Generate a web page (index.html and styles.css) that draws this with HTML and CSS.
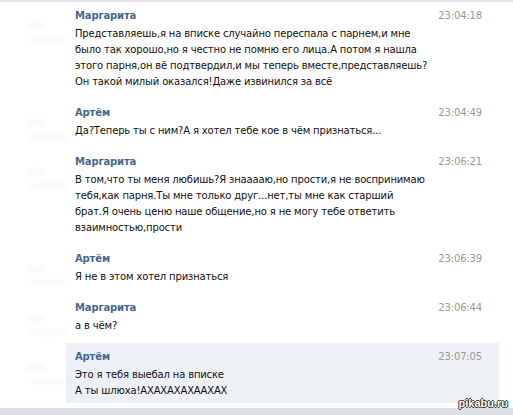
FILE: index.html
```html
<!DOCTYPE html>
<html>
<head>
<meta charset="utf-8">
<link rel="stylesheet" href="styles.css">
</head>
<body>
<div class="page">
  <div class="topbar"></div>
  <div class="list">
    <div class="msg">
      <div class="avatar"><span class="blur b1"></span><span class="blur b2"></span></div>
      <div class="body">
        <div class="head"><span class="name">Маргарита</span><span class="time">23:04:18</span></div>
        <div class="text">Представляешь,я на вписке случайно переспала с парнем,и мне<br>было так хорошо,но я честно не помню его лица.А потом я нашла<br>этого парня,он вё подтвердил,и мы теперь вместе,представляешь?<br>Он такой милый оказался!Даже извинился за всё</div>
      </div>
    </div>
    <div class="msg">
      <div class="avatar"><span class="blur b1"></span><span class="blur b2"></span></div>
      <div class="body">
        <div class="head"><span class="name">Артём</span><span class="time">23:04:49</span></div>
        <div class="text">Да?Теперь ты с ним?А я хотел тебе кое в чём признаться...</div>
      </div>
    </div>
    <div class="msg">
      <div class="avatar"><span class="blur b1"></span><span class="blur b2"></span></div>
      <div class="body">
        <div class="head"><span class="name">Маргарита</span><span class="time">23:06:21</span></div>
        <div class="text">В том,что ты меня любишь?Я знаааaю,но прости,я не воспринимаю<br>тебя,как парня.Ты мне только друг...нет,ты мне как старший<br>брат.Я очень ценю наше общение,но я не могу тебе ответить<br>взаимностью,прости</div>
      </div>
    </div>
    <div class="msg">
      <div class="avatar"><span class="blur b1"></span><span class="blur b2"></span></div>
      <div class="body">
        <div class="head"><span class="name">Артём</span><span class="time">23:06:39</span></div>
        <div class="text">Я не в этом хотел признаться</div>
      </div>
    </div>
    <div class="msg">
      <div class="avatar"><span class="blur b1"></span><span class="blur b2"></span></div>
      <div class="body">
        <div class="head"><span class="name">Маргарита</span><span class="time">23:06:44</span></div>
        <div class="text">а в чём?</div>
      </div>
    </div>
    <div class="msg last">
      <div class="avatar"><span class="blur b1"></span><span class="blur b2"></span></div>
      <div class="body hl">
        <div class="head"><span class="name">Артём</span><span class="time">23:07:05</span></div>
        <div class="text">Это я тебя выебал на вписке<br>А ты шлюха!АХАХАХАХААХАХ</div>
      </div>
    </div>
  </div>
  <div class="bottombar"></div>
  <div class="watermark">pikabu.ru</div>
</div>
</body>
</html>
```
FILE: styles.css
```css
* { box-sizing: border-box; }
html, body { margin: 0; padding: 0; background: #fff; }
.page {
  position: relative;
  width: 513px;
  height: 415px;
  overflow: hidden;
  font-family: "DejaVu Sans", Tahoma, sans-serif;
  font-size: 10px;
  letter-spacing: -0.15px;
  color: #000;
  display: flex;
  flex-direction: column;
}
.topbar { height: 2px; background: #e4e6e9; flex: none; }
.list { flex: 1; display: flex; flex-direction: column; }
.msg { display: flex; }
.avatar {
  width: 66px;
  flex: none;
  display: flex;
  flex-direction: column;
  align-items: flex-start;
  padding: 22px 0 0 26px;
  gap: 10px;
}
.blur {
  display: block;
  height: 4px;
  background: #f5f5f5;
  filter: blur(2px);
}
.b1 { width: 20px; }
.b2 { width: 36px; margin-left: 4px; }
.body {
  width: 433px;
  padding: 6px 17px 9px 9px;
}
.last .body { padding-bottom: 4px; }
.hl { background: #edf0f5; }
.head {
  display: flex;
  justify-content: space-between;
  line-height: 16px;
  margin-bottom: 2px;
}
.name { color: #45688e; font-weight: bold; }
.time { color: #999; }
.text { line-height: 16px; color: #111; }
.bottombar { height: 7px; background: #dcdfe3; flex: none; margin-top: 5px; }
.watermark {
  position: absolute;
  right: 5px;
  bottom: 6px;
  font-family: "Liberation Sans", Arial, sans-serif;
  font-size: 11px;
  letter-spacing: 0;
  font-weight: bold;
  color: #fff;
  text-shadow: -1px 0 #333, 1px 0 #333, 0 -1px #333, 0 1px #333;
}
```
